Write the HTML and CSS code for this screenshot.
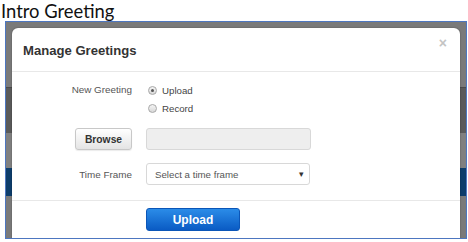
FILE: index.html
```html
<!DOCTYPE html>
<html>
<head>
<meta charset="utf-8">
<link rel="stylesheet" href="styles.css">
</head>
<body>
<h1 class="page-title">Intro Greeting</h1>
<div class="frame">
  <div class="modal">
    <div class="modal-header">
      <h2 class="modal-title">Manage Greetings</h2>
      <span class="close">×</span>
    </div>
    <div class="modal-body">
      <div class="label label-top">New Greeting</div>
      <div class="radios">
        <div class="radio-row"><span class="radio checked"></span><span>Upload</span></div>
        <div class="radio-row"><span class="radio"></span><span>Record</span></div>
      </div>
      <div class="label"><button class="btn-browse">Browse</button></div>
      <div class="file-input"></div>
      <div class="label row3">Time Frame</div>
      <div class="select row3"><span>Select a time frame</span><span class="caret">▾</span></div>
    </div>
    <div class="modal-footer">
      <button class="btn-upload">Upload</button>
    </div>
  </div>
</div>
</body>
</html>
```

FILE: styles.css
```css
html, body {
  margin: 0;
  padding: 0;
  background: #fff;
}
body {
  font-family: "Liberation Sans", Arial, sans-serif;
}
.page-title {
  margin: 0;
  padding-left: 1px;
  font-family: Lato, sans-serif;
  font-weight: 400;
  font-size: 18.4px;
  line-height: 22px;
  color: #111;
  height: 21px;
}
.frame {
  margin-left: 5px;
  width: 462px;
  height: 218px;
  box-sizing: border-box;
  border: 1px solid #4d76c0;
  padding: 6px 6px 0 6px;
  overflow: hidden;
  background: linear-gradient(to bottom,
    #7a7a7a 0, #7a7a7a 65px,
    #4a4a4a 65px, #4a4a4a 66px,
    #5a5a5a 66px, #5a5a5a 111px,
    #808080 111px, #808080 146px,
    #0d3d6b 146px, #0d3d6b 174px,
    #7a7a7a 174px);
}
.modal {
  background: #fff;
  border-radius: 6px 6px 0 0;
  height: 230px;
  box-shadow: 0 0 2px rgba(0,0,0,0.35);
}
.modal-header {
  border-bottom: 1px solid #e8e8e8;
  display: flex;
  align-items: center;
  justify-content: space-between;
  padding: 2px 13px 0 11px;
  box-sizing: content-box;
  height: 41px;
}
.modal-title {
  margin: 0;
  font-size: 13.1px;
  font-weight: 700;
  color: #333;
}
.close {
  font-size: 14px;
  font-weight: 700;
  color: #c4c4c4;
  line-height: 1;
  margin-top: -16px;
}
.modal-body {
  display: grid;
  grid-template-columns: 120px 165px;
  column-gap: 14px;
  row-gap: 11px;
  padding: 9px 0 15px 0;
  font-size: 9.9px;
  color: #555;
}
.label {
  justify-self: end;
  align-self: center;
  text-align: right;
}
.label-top {
  align-self: start;
  line-height: 18px;
}
.row3 {
  margin-top: 2px;
}
.radios {
  display: flex;
  flex-direction: column;
  font-size: 9.7px;
}
.radio-row {
  height: 18px;
  display: flex;
  align-items: center;
  gap: 5px;
  padding-left: 2px;
  color: #444;
}
.radio {
  width: 9px;
  height: 9px;
  box-sizing: border-box;
  border-radius: 50%;
  border: 1px solid #a8a8a8;
  background: linear-gradient(#f4f4f4, #d8d8d8);
  display: flex;
  align-items: center;
  justify-content: center;
}
.radio.checked::after {
  content: "";
  width: 3px;
  height: 3px;
  border-radius: 50%;
  background: #555;
}
.btn-browse {
  width: 57px;
  height: 22px;
  box-sizing: border-box;
  border: 1px solid #c8c8c8;
  border-radius: 3px;
  background: linear-gradient(#ffffff, #e4e4e4);
  font-family: "Liberation Sans", Arial, sans-serif;
  font-size: 10.3px;
  font-weight: 700;
  color: #333;
  padding: 0;
  box-shadow: 0 1px 1px rgba(0,0,0,0.08);
}
.file-input {
  width: 165px;
  height: 22px;
  box-sizing: border-box;
  background: #eeeeee;
  border: 1px solid #d8d8d8;
  border-radius: 3px;
}
.select {
  width: 164px;
  height: 22px;
  box-sizing: border-box;
  border: 1px solid #d8d8d8;
  border-radius: 3px;
  display: flex;
  align-items: center;
  justify-content: space-between;
  padding: 0 5px 0 8px;
  color: #555;
  font-size: 9.7px;
}
.caret {
  font-size: 9px;
  color: #333;
}
.modal-footer {
  border-top: 1px solid #e8e8e8;
  padding: 7px 0 0 134px;
}
.btn-upload {
  width: 94px;
  height: 23px;
  box-sizing: border-box;
  border: 1px solid #0b56b8;
  border-radius: 3px;
  background: linear-gradient(#2b8ce8, #0a5bc4);
  color: #fff;
  font-family: "Liberation Sans", Arial, sans-serif;
  font-size: 12px;
  font-weight: 700;
  padding: 0;
}
```
